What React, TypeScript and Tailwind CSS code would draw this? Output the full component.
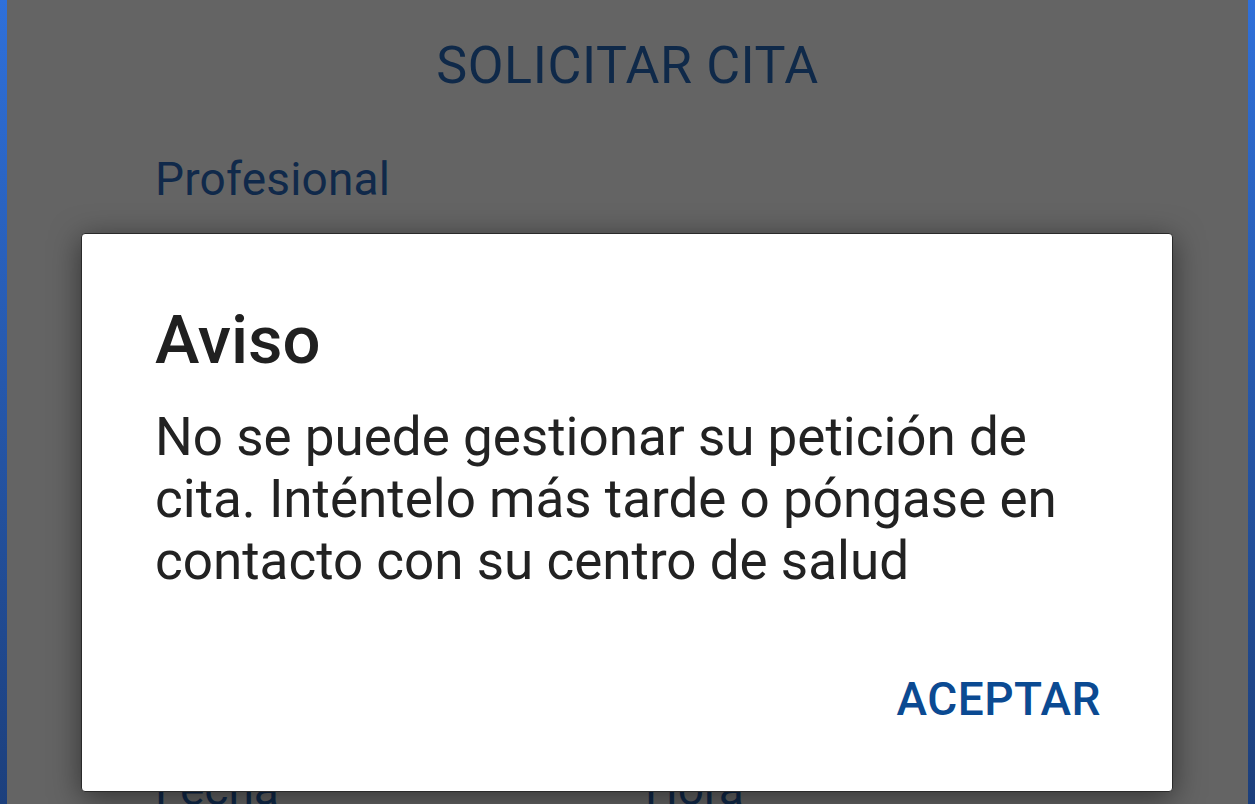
export default function App() {
  return (
    <div
      className="relative w-[1255px] h-[804px] overflow-hidden bg-[#646464] flex"
      style={{ fontFamily: "Roboto, 'Noto Sans', sans-serif" }}
    >
      <div className="w-[7px] shrink-0 bg-gradient-to-b from-[#2f70da] to-[#1c3f7c]" />

      <div className="flex-1 flex flex-col">
        <h1 className="mt-[36px] text-center text-[52px] leading-[60px] text-[#0f2949] tracking-[0.6px]">
          SOLICITAR CITA
        </h1>
        <p className="mt-[56px] pl-[148px] text-[46px] leading-[54px] text-[#10294a] tracking-[0.2px]">Profesional</p>
        <div className="mt-[556px] flex pl-[148px] text-[46px] leading-[54px] text-[#10294a]">
          <span className="w-[490px]">Fecha</span>
          <span>Hora</span>
        </div>
      </div>

      <div className="w-[7px] shrink-0 bg-gradient-to-b from-[#2f70da] to-[#1c3f7c]" />

      <div className="absolute left-[81px] top-[233px] w-[1092px] h-[559px] rounded-[4px] bg-white border border-[#2a2a2a] shadow-[0_6px_30px_rgba(0,0,0,0.5)] flex flex-col pl-[73px] pr-[60px]">
        <h2 className="mt-[68px] text-[67px] leading-[76px] font-medium text-[#202020]">Aviso</h2>
        <p className="mt-[28px] text-[53px] leading-[62px] text-[#222222]">
          No se puede gestionar su petición de cita. Inténtelo más tarde o póngase en contacto con su centro de salud
        </p>
        <div className="mt-auto mb-[65px] pr-[11px] flex justify-end">
          <button className="text-[46px] leading-[54px] font-medium text-[#0b4a92] tracking-[0.5px]">ACEPTAR</button>
        </div>
      </div>
    </div>
  );
}
